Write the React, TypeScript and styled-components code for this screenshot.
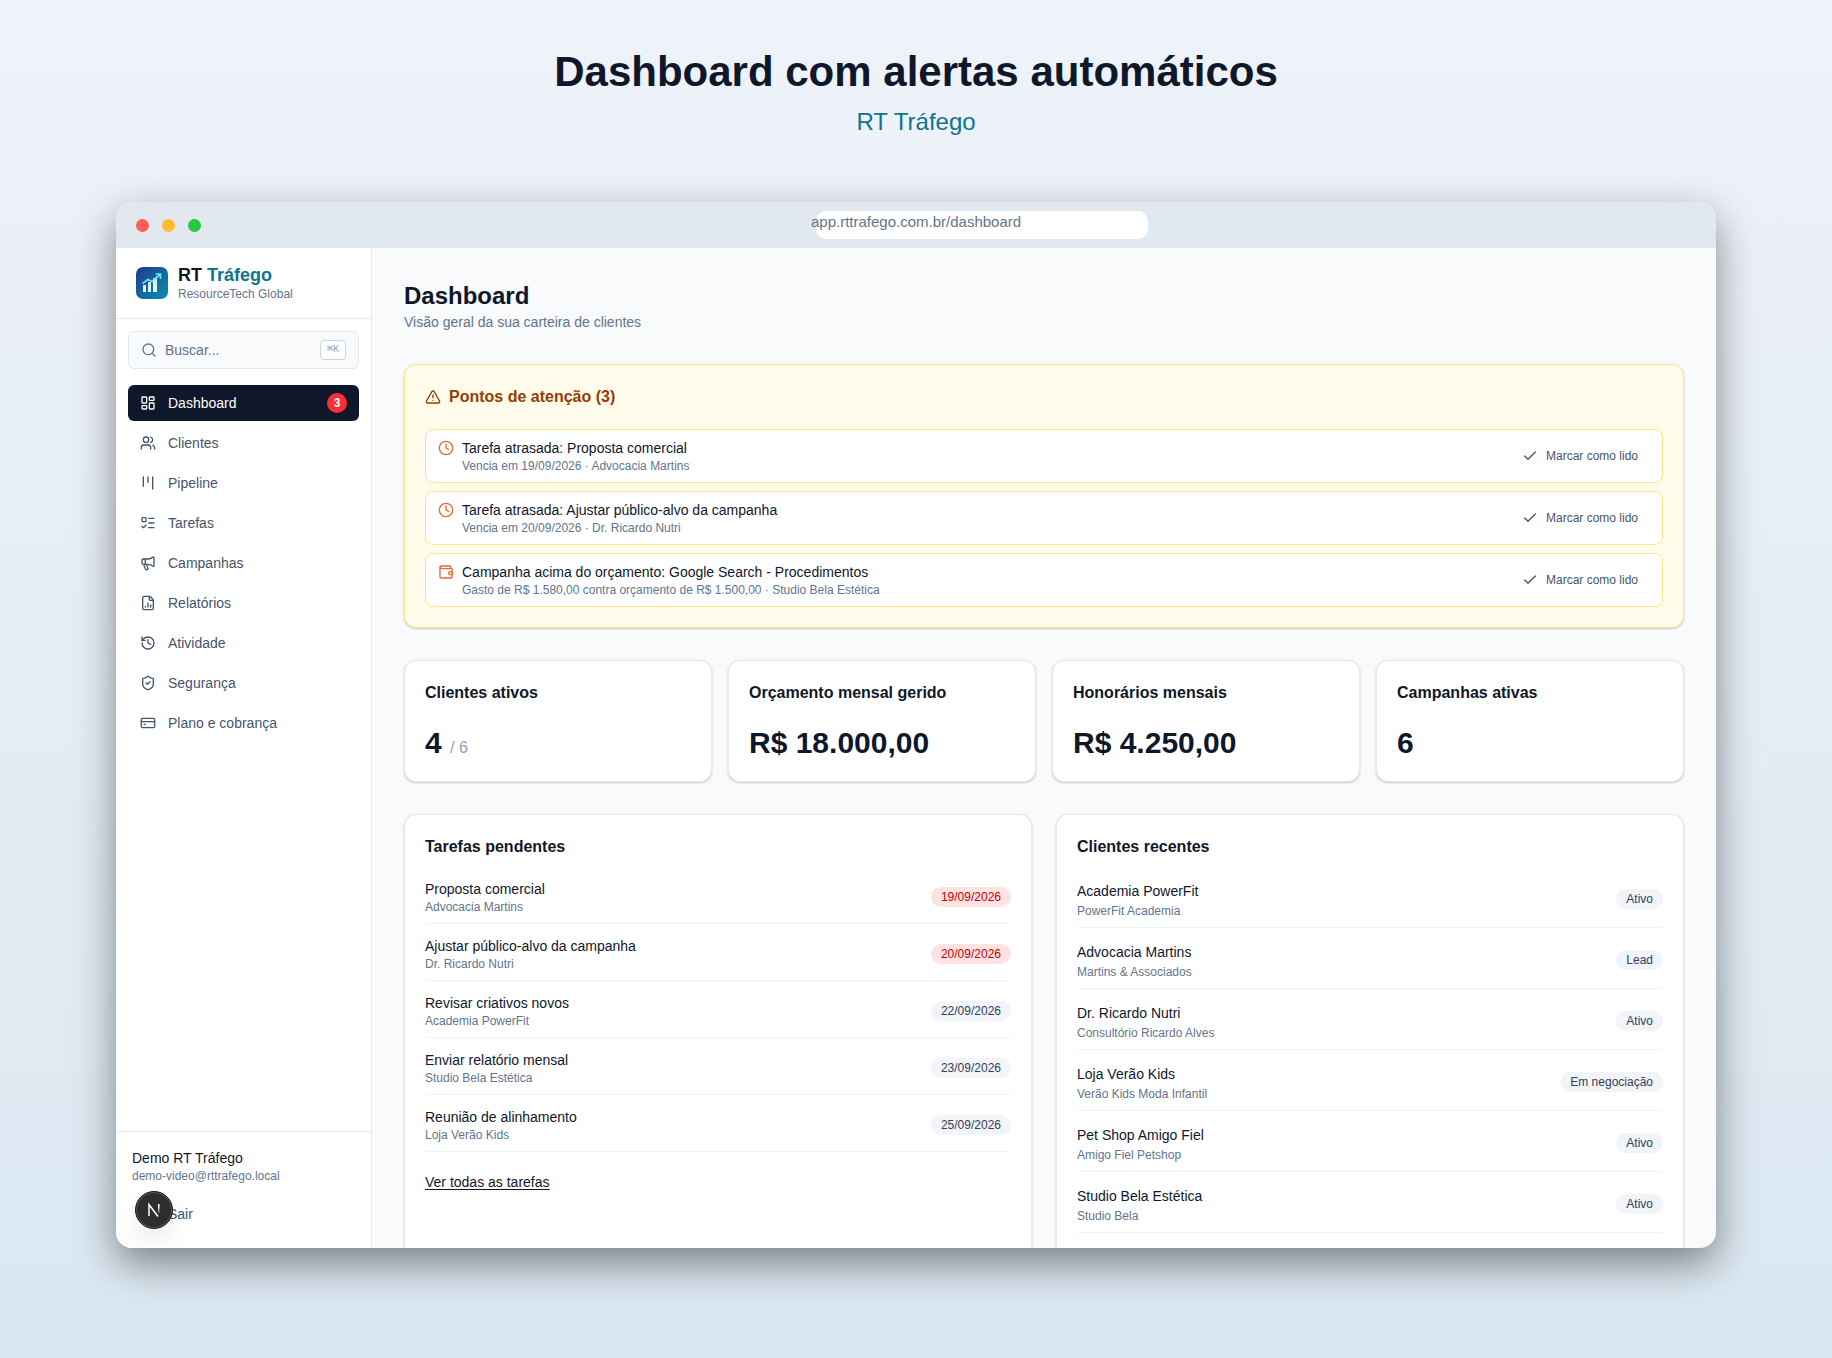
import React from 'react';
import styled, { createGlobalStyle } from 'styled-components';
import {
  Check,
  Clock,
  FileChartColumn,
  History,
  Kanban,
  LayoutDashboard,
  ListTodo,
  LogOut,
  Megaphone,
  Search,
  ShieldCheck,
  TriangleAlert,
  Users,
  Wallet,
} from 'lucide-react';

type IconType = React.ComponentType<{ size?: number }>;

const color = {
  ink: '#0f172b',
  text: '#45556c',
  muted: '#62748e',
  faint: '#90a1b9',
  line: '#e2e8f0',
  lineSoft: '#f1f5f9',
  surface: '#f8fafc',
  teal: '#0e7490',
};

const GlobalStyle = createGlobalStyle`
  *, *::before, *::after { box-sizing: border-box; }
  body {
    margin: 0;
    font-family: 'Liberation Sans', Arial, sans-serif;
    font-size: 14px;
    line-height: 20px;
    color: ${color.ink};
  }
  h1, h2, h3, p, ul { margin: 0; padding: 0; }
  ul { list-style: none; }
  button, input { font: inherit; color: inherit; }
  svg { flex-shrink: 0; display: block; }
`;

const Page = styled.div`
  height: 100vh;
  display: flex;
  flex-direction: column;
  padding: 46px 116px 110px;
  background: linear-gradient(180deg, #eff2f9 0%, #dae7f1 100%);
`;

const Hero = styled.header`
  text-align: center;
  padding-bottom: 64px;
`;

const HeroTitle = styled.h1`
  font-size: 42px;
  line-height: 52px;
  font-weight: 700;
`;

const HeroSubtitle = styled.p`
  margin-top: 8px;
  font-size: 24px;
  line-height: 32px;
  color: ${color.teal};
`;

const BrowserWindow = styled.div`
  position: relative;
  flex: 1;
  min-height: 0;
  display: flex;
  flex-direction: column;
  overflow: hidden;
  border-radius: 16px;
  background: ${color.surface};
  box-shadow: 0 16px 40px rgba(0, 0, 0, 0.44);
`;

const TitleBar = styled.div`
  display: grid;
  grid-template-columns: 1fr auto 1fr;
  align-items: center;
  flex-shrink: 0;
  height: 46px;
  padding: 0 20px;
  background: #e2e8f0;
`;

const Lights = styled.div`
  display: flex;
  gap: 13px;
`;

const Light = styled.span<{ $tone: string }>`
  width: 13px;
  height: 13px;
  border-radius: 50%;
  background: ${(p) => p.$tone};
`;

const AddressBar = styled.label`
  position: relative;
  display: flex;
  padding-bottom: 6px;

  &::before {
    content: '';
    position: absolute;
    left: 5px;
    top: -1px;
    width: 332px;
    height: 28px;
    border-radius: 10px;
    background: #fff;
  }
`;

const AddressInput = styled.input`
  position: relative;
  width: 210px;
  height: 20px;
  padding: 0;
  border: 0;
  outline: 0;
  background: transparent;
  font-size: 15px;
  color: #64748b;
`;

const AppBody = styled.div`
  flex: 1;
  min-height: 0;
  display: flex;
`;

const Sidebar = styled.aside`
  display: flex;
  flex-direction: column;
  flex: 0 0 256px;
  min-width: 0;
  border-right: 1px solid ${color.line};
  background: #fff;
`;

const Brand = styled.div`
  display: flex;
  align-items: center;
  gap: 10px;
  padding: 16px 20px;
  border-bottom: 1px solid ${color.line};
`;

const BrandName = styled.p`
  font-size: 18px;
  line-height: 22px;
  font-weight: 700;

  span { color: ${color.teal}; }
`;

const Caption = styled.p`
  font-size: 12px;
  line-height: 16px;
  color: ${color.muted};
`;

const SearchBox = styled.label`
  display: flex;
  align-items: center;
  gap: 8px;
  height: 38px;
  margin: 12px 12px 16px;
  padding: 0 12px;
  border: 1px solid ${color.line};
  border-radius: 6px;
  background: ${color.surface};
  color: ${color.muted};
`;

const SearchInput = styled.input`
  flex: 1;
  width: 100%;
  min-width: 0;
  padding: 0;
  border: 0;
  outline: 0;
  background: transparent;

  &::placeholder { color: ${color.muted}; opacity: 1; }
`;

const Shortcut = styled.kbd`
  padding: 0 6px;
  border: 1px solid #cad5e2;
  border-radius: 4px;
  background: #fff;
  font-family: 'Liberation Mono', monospace;
  font-size: 10px;
  line-height: 18px;
  color: ${color.faint};
`;

const Nav = styled.nav`
  flex: 1;
  display: flex;
  flex-direction: column;
  gap: 4px;
  padding: 0 12px;
`;

const NavLink = styled.a<{ $active?: boolean }>`
  display: flex;
  align-items: center;
  gap: 12px;
  height: 36px;
  padding: 0 12px;
  border-radius: 6px;
  text-decoration: none;
  color: ${(p) => (p.$active ? '#fff' : color.text)};
  background: ${(p) => (p.$active ? color.ink : 'transparent')};
`;

const Count = styled.span`
  margin-left: auto;
  width: 20px;
  border-radius: 10px;
  background: #fb2c36;
  color: #fff;
  font-size: 12px;
  font-weight: 700;
  text-align: center;
`;

const Account = styled.div`
  padding: 16px;
  border-top: 1px solid ${color.line};
`;

const SignOut = styled.button`
  display: flex;
  align-items: center;
  gap: 8px;
  width: 100%;
  height: 36px;
  margin-top: 12px;
  padding: 0 12px;
  border: 0;
  border-radius: 6px;
  background: transparent;
  color: ${color.text};
`;

const DevBadge = styled.button`
  position: absolute;
  left: 19px;
  bottom: 19px;
  width: 38px;
  height: 38px;
  padding: 0;
  display: grid;
  place-items: center;
  border: 1px solid #171717;
  border-radius: 50%;
  background: #2d2d2d;
  box-shadow: inset 0 0 0 1px #5a5a5a, 0 12px 24px rgba(0, 0, 0, 0.08);
`;

const Main = styled.main`
  flex: 1;
  min-width: 0;
  display: flex;
  flex-direction: column;
  gap: 32px;
  padding: 32px;
`;

const PageTitle = styled.h2`
  font-size: 24px;
  line-height: 32px;
  font-weight: 700;
`;

const PageSubtitle = styled.p`
  color: ${color.muted};
`;

const Card = styled.section<{ $warning?: boolean }>`
  display: flex;
  flex-direction: column;
  gap: 20px;
  padding: 20px;
  border: 1px solid ${(p) => (p.$warning ? '#fee685' : color.line)};
  border-radius: 12px;
  background: ${(p) => (p.$warning ? '#fffbeb' : '#fff')};
  box-shadow: 0 1px 3px rgba(0, 0, 0, 0.1), 0 1px 2px rgba(0, 0, 0, 0.1);
`;

const PanelCard = styled(Card)`
  padding-bottom: 80px;
`;

const CardTitle = styled.h3<{ $warning?: boolean }>`
  display: flex;
  align-items: center;
  gap: 8px;
  font-size: 16px;
  line-height: 24px;
  font-weight: 700;
  color: ${(p) => (p.$warning ? '#973c00' : color.ink)};
`;

const AlertList = styled.ul`
  display: grid;
  gap: 8px;
`;

const AlertItem = styled.li`
  display: flex;
  align-items: center;
  justify-content: space-between;
  padding: 8px 12px;
  border: 1px solid #fee685;
  border-radius: 8px;
  background: #fff;
`;

const AlertInfo = styled.div`
  display: flex;
  gap: 8px;

  svg { margin-top: 2px; color: #e86a35; }
`;

const MarkRead = styled.button`
  display: flex;
  align-items: center;
  gap: 8px;
  height: 32px;
  padding: 0 12px;
  border: 0;
  border-radius: 6px;
  background: transparent;
  font-size: 12px;
  color: ${color.text};
`;

const Stats = styled.div`
  display: grid;
  grid-template-columns: repeat(4, 1fr);
  gap: 16px;
`;

const StatValue = styled.p`
  font-size: 30px;
  line-height: 36px;
  font-weight: 700;

  small {
    font-size: 16px;
    line-height: 16px;
    font-weight: 400;
    color: ${color.faint};
  }
`;

const Panels = styled.div`
  flex: 1 0 auto;
  display: grid;
  grid-template-columns: repeat(2, 1fr);
  gap: 24px;
`;

const Rows = styled.ul`
  display: grid;
  gap: 12px;
`;

const Row = styled.li`
  display: flex;
  align-items: center;
  justify-content: space-between;
  padding-bottom: 8px;
  border-bottom: 1px solid ${color.lineSoft};
`;

const RowText = styled.div<{ $roomy?: boolean }>`
  display: grid;
  gap: ${(p) => (p.$roomy ? '2px' : '0')};
  padding-top: ${(p) => (p.$roomy ? '2px' : '0')};
`;

const Pill = styled.span<{ $late?: boolean }>`
  padding: 2px 10px;
  border-radius: 10px;
  font-size: 12px;
  line-height: 16px;
  color: ${(p) => (p.$late ? '#c10007' : '#314158')};
  background: ${(p) => (p.$late ? '#ffe2e2' : '#f1f5f9')};
`;

const MoreLink = styled.a`
  align-self: flex-start;
  color: ${color.ink};
  text-underline-offset: 2px;
`;

const BillingCard: IconType = ({ size = 16 }) => (
  <svg
    width={size}
    height={size}
    viewBox="0 0 24 24"
    fill="none"
    stroke="currentColor"
    strokeWidth="2"
    strokeLinecap="round"
    strokeLinejoin="round"
    aria-hidden="true"
  >
    <rect x="2" y="5" width="20" height="14" rx="2" />
    <path d="M2 10h20M6 14h2" />
  </svg>
);

const navItems: { label: string; icon: IconType; count?: number }[] = [
  { label: 'Dashboard', icon: LayoutDashboard, count: 3 },
  { label: 'Clientes', icon: Users },
  { label: 'Pipeline', icon: Kanban },
  { label: 'Tarefas', icon: ListTodo },
  { label: 'Campanhas', icon: Megaphone },
  { label: 'Relatórios', icon: FileChartColumn },
  { label: 'Atividade', icon: History },
  { label: 'Segurança', icon: ShieldCheck },
  { label: 'Plano e cobrança', icon: BillingCard },
];

const alerts: { icon: IconType; title: string; detail: string }[] = [
  { icon: Clock, title: 'Tarefa atrasada: Proposta comercial', detail: 'Vencia em 19/09/2026 · Advocacia Martins' },
  { icon: Clock, title: 'Tarefa atrasada: Ajustar público-alvo da campanha', detail: 'Vencia em 20/09/2026 · Dr. Ricardo Nutri' },
  {
    icon: Wallet,
    title: 'Campanha acima do orçamento: Google Search - Procedimentos',
    detail: 'Gasto de R$ 1.580,00 contra orçamento de R$ 1.500,00 · Studio Bela Estética',
  },
];

const stats = [
  { label: 'Clientes ativos', value: '4', total: '/ 6' },
  { label: 'Orçamento mensal gerido', value: 'R$ 18.000,00' },
  { label: 'Honorários mensais', value: 'R$ 4.250,00' },
  { label: 'Campanhas ativas', value: '6' },
];

const tasks = [
  { title: 'Proposta comercial', client: 'Advocacia Martins', due: '19/09/2026', late: true },
  { title: 'Ajustar público-alvo da campanha', client: 'Dr. Ricardo Nutri', due: '20/09/2026', late: true },
  { title: 'Revisar criativos novos', client: 'Academia PowerFit', due: '22/09/2026' },
  { title: 'Enviar relatório mensal', client: 'Studio Bela Estética', due: '23/09/2026' },
  { title: 'Reunião de alinhamento', client: 'Loja Verão Kids', due: '25/09/2026' },
];

const clients = [
  { name: 'Academia PowerFit', company: 'PowerFit Academia', status: 'Ativo' },
  { name: 'Advocacia Martins', company: 'Martins & Associados', status: 'Lead' },
  { name: 'Dr. Ricardo Nutri', company: 'Consultório Ricardo Alves', status: 'Ativo' },
  { name: 'Loja Verão Kids', company: 'Verão Kids Moda Infantil', status: 'Em negociação' },
  { name: 'Pet Shop Amigo Fiel', company: 'Amigo Fiel Petshop', status: 'Ativo' },
  { name: 'Studio Bela Estética', company: 'Studio Bela', status: 'Ativo' },
];

const Logo = () => (
  <svg width="32" height="32" viewBox="0 0 32 32" aria-hidden="true">
    <defs>
      <linearGradient id="logo-bg" x1="0" y1="0" x2="1" y2="1">
        <stop offset="0" stopColor="#1e3a8a" />
        <stop offset="1" stopColor="#0891b2" />
      </linearGradient>
    </defs>
    <rect width="32" height="32" rx="7" fill="url(#logo-bg)" />
    <g fill="#e0f2fe">
      <rect x="7" y="18" width="3" height="7" rx="0.5" />
      <rect x="12" y="15" width="3" height="10" rx="0.5" />
      <rect x="17" y="11" width="4" height="14" rx="0.5" />
    </g>
    <path d="M6.500 16.500 12 12.500l4 2L24 7.500M19.500 7h5v5" fill="none" stroke="#67e8f9" strokeWidth="1.700" />
  </svg>
);

export default function App() {
  return (
    <Page>
      <GlobalStyle />
      <Hero>
        <HeroTitle>Dashboard com alertas automáticos</HeroTitle>
        <HeroSubtitle>RT Tráfego</HeroSubtitle>
      </Hero>

      <BrowserWindow>
        <TitleBar>
          <Lights>
            <Light $tone="#ff5f57" />
            <Light $tone="#febc2e" />
            <Light $tone="#28c840" />
          </Lights>
          <AddressBar>
            <AddressInput aria-label="Endereço" readOnly value="app.rttrafego.com.br/dashboard" />
          </AddressBar>
        </TitleBar>

        <AppBody>
          <Sidebar>
            <Brand>
              <Logo />
              <div>
                <BrandName>
                  RT <span>Tráfego</span>
                </BrandName>
                <Caption>ResourceTech Global</Caption>
              </div>
            </Brand>
            <SearchBox>
              <Search size={16} />
              <SearchInput aria-label="Buscar" placeholder="Buscar..." />
              <Shortcut>⌘K</Shortcut>
            </SearchBox>
            <Nav>
              {navItems.map(({ label, icon: Icon, count }, i) => (
                <NavLink key={label} href="#" $active={i === 0}>
                  <Icon size={16} />
                  {label}
                  {count && <Count>{count}</Count>}
                </NavLink>
              ))}
            </Nav>
            <Account>
              <p>Demo RT Tráfego</p>
              <Caption>demo-video@rttrafego.local</Caption>
              <SignOut>
                <LogOut size={16} />
                Sair
              </SignOut>
            </Account>
          </Sidebar>

          <Main>
            <header>
              <PageTitle>Dashboard</PageTitle>
              <PageSubtitle>Visão geral da sua carteira de clientes</PageSubtitle>
            </header>

            <Card $warning>
              <CardTitle $warning>
                <TriangleAlert size={16} />
                Pontos de atenção (3)
              </CardTitle>
              <AlertList>
                {alerts.map(({ icon: Icon, title, detail }) => (
                  <AlertItem key={title}>
                    <AlertInfo>
                      <Icon size={16} />
                      <div>
                        <p>{title}</p>
                        <Caption>{detail}</Caption>
                      </div>
                    </AlertInfo>
                    <MarkRead>
                      <Check size={16} />
                      Marcar como lido
                    </MarkRead>
                  </AlertItem>
                ))}
              </AlertList>
            </Card>

            <Stats>
              {stats.map(({ label, value, total }) => (
                <Card key={label}>
                  <CardTitle>{label}</CardTitle>
                  <StatValue>
                    {value} {total && <small>{total}</small>}
                  </StatValue>
                </Card>
              ))}
            </Stats>

            <Panels>
              <PanelCard>
                <CardTitle>Tarefas pendentes</CardTitle>
                <Rows>
                  {tasks.map(({ title, client, due, late }) => (
                    <Row key={title}>
                      <RowText>
                        <p>{title}</p>
                        <Caption>{client}</Caption>
                      </RowText>
                      <Pill $late={late}>{due}</Pill>
                    </Row>
                  ))}
                </Rows>
                <MoreLink href="#">Ver todas as tarefas</MoreLink>
              </PanelCard>
              <PanelCard>
                <CardTitle>Clientes recentes</CardTitle>
                <Rows>
                  {clients.map(({ name, company, status }) => (
                    <Row key={name}>
                      <RowText $roomy>
                        <p>{name}</p>
                        <Caption>{company}</Caption>
                      </RowText>
                      <Pill>{status}</Pill>
                    </Row>
                  ))}
                </Rows>
              </PanelCard>
            </Panels>
          </Main>
        </AppBody>

        <DevBadge aria-label="Next.js">
          <svg width="16" height="16" viewBox="0 0 16 16" fill="none" aria-hidden="true">
            <defs>
              <linearGradient id="n-stroke" x1="0" y1="0" x2="0" y2="1">
                <stop offset="0.300" stopColor="#fff" />
                <stop offset="1" stopColor="#fff" stopOpacity="0.200" />
              </linearGradient>
            </defs>
            <path d="M3 14V2.500L12 14.500" stroke="#fff" strokeWidth="1.500" />
            <rect x="12" y="2" width="1.500" height="9" fill="url(#n-stroke)" />
          </svg>
        </DevBadge>
      </BrowserWindow>
    </Page>
  );
}
